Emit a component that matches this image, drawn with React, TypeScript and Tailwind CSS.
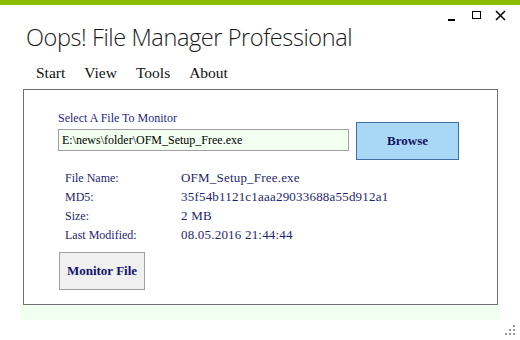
import React from "react";

const serif = { fontFamily: '"Liberation Serif", "DejaVu Serif", serif' };

const info = [
  { label: "File Name:", value: "OFM_Setup_Free.exe" },
  { label: "MD5:", value: "35f54b1121c1aaa29033688a55d912a1" },
  { label: "Size:", value: "2 MB" },
  { label: "Last Modified:", value: "08.05.2016 21:44:44" },
];

function WindowControls() {
  return (
    <div className="absolute left-[447px] top-[9px] flex items-start">
      <div className="w-[24px] h-[12px] flex items-end">
        <div className="ml-[1px] w-[7px] h-[2px] bg-black" />
      </div>
      <div className="w-[24px] h-[12px] flex items-start">
        <div className="ml-[1px] mt-[2px] w-[9px] h-[8px] border-[1.5px] border-black" />
      </div>
      <svg className="mt-[1px]" width="11" height="11" viewBox="0 0 11 11">
        <path d="M1 1 L10 10 M10 1 L1 10" stroke="#000" strokeWidth="1.5" />
      </svg>
    </div>
  );
}

function Grip() {
  const dots = [
    [8, 0],
    [4, 4],
    [8, 4],
    [0, 8],
    [4, 8],
    [8, 8],
  ];
  return (
    <svg className="absolute right-[5px] bottom-[5px]" width="10" height="10" viewBox="0 0 10 10">
      {dots.map(([x, y], i) => (
        <rect key={i} x={x} y={y} width="2" height="2" fill="#9a9a9a" />
      ))}
    </svg>
  );
}

export default function App() {
  return (
    <div className="relative w-[520px] h-[340px] bg-white overflow-hidden">
      <div className="h-[5px] bg-[#8cbc00]" />
      <WindowControls />

      <h1
        className="pl-[26px] pt-[16px] text-[23.5px] leading-[32px] font-light tracking-[-0.4px] text-[#1a1a1a]"
        style={{ fontFamily: '"Open Sans", "Noto Sans", sans-serif' }}
      >
        Oops! File Manager Professional
      </h1>

      <nav className="flex gap-[19px] pl-[36px] pt-[10px] text-[15.5px] leading-[20px] text-[#111]" style={serif}>
        <span>Start</span>
        <span>View</span>
        <span>Tools</span>
        <span>About</span>
      </nav>

      <div className="ml-[23px] mt-[6px] w-[475px]">
        <div className="h-[216px] border border-[#707070] bg-white pl-[34px] pt-[21px]" style={serif}>
          <div className="flex items-start gap-[7px]">
            <div className="flex flex-col">
              <span className="text-[12px] leading-[15px] text-[#1f1f86]">Select A File To Monitor</span>
              <div className="mt-[3px] w-[291px] h-[22px] border border-[#a0a0a0] bg-[#f2fff0] px-[3px] text-[12px] leading-[20px] text-black">
                E:\news\folder\OFM_Setup_Free.exe
              </div>
            </div>
            <button className="mt-[11px] w-[103px] h-[38px] border border-[#3f6f9f] bg-[#a8d8f5] text-[13px] font-bold text-[#14145e]">
              Browse
            </button>
          </div>

          <div className="mt-[10px] pl-[7px] grid grid-cols-[116px_1fr] gap-y-[3px] leading-[16px] text-[#1f1f6e]">
            {info.map((row) => (
              <React.Fragment key={row.label}>
                <span className="text-[12px]">{row.label}</span>
                <span className="text-[13px] tracking-[0.2px]">{row.value}</span>
              </React.Fragment>
            ))}
          </div>

          <button className="mt-[9px] ml-[1px] w-[86px] h-[38px] border border-[#a0a0a0] bg-[#f0f0f0] text-[13px] font-bold text-[#14146e]">
            Monitor File
          </button>
        </div>
      </div>
      <div className="ml-[20px] w-[480px] h-[15px] bg-[#f0fff0]" />

      <Grip />
    </div>
  );
}
